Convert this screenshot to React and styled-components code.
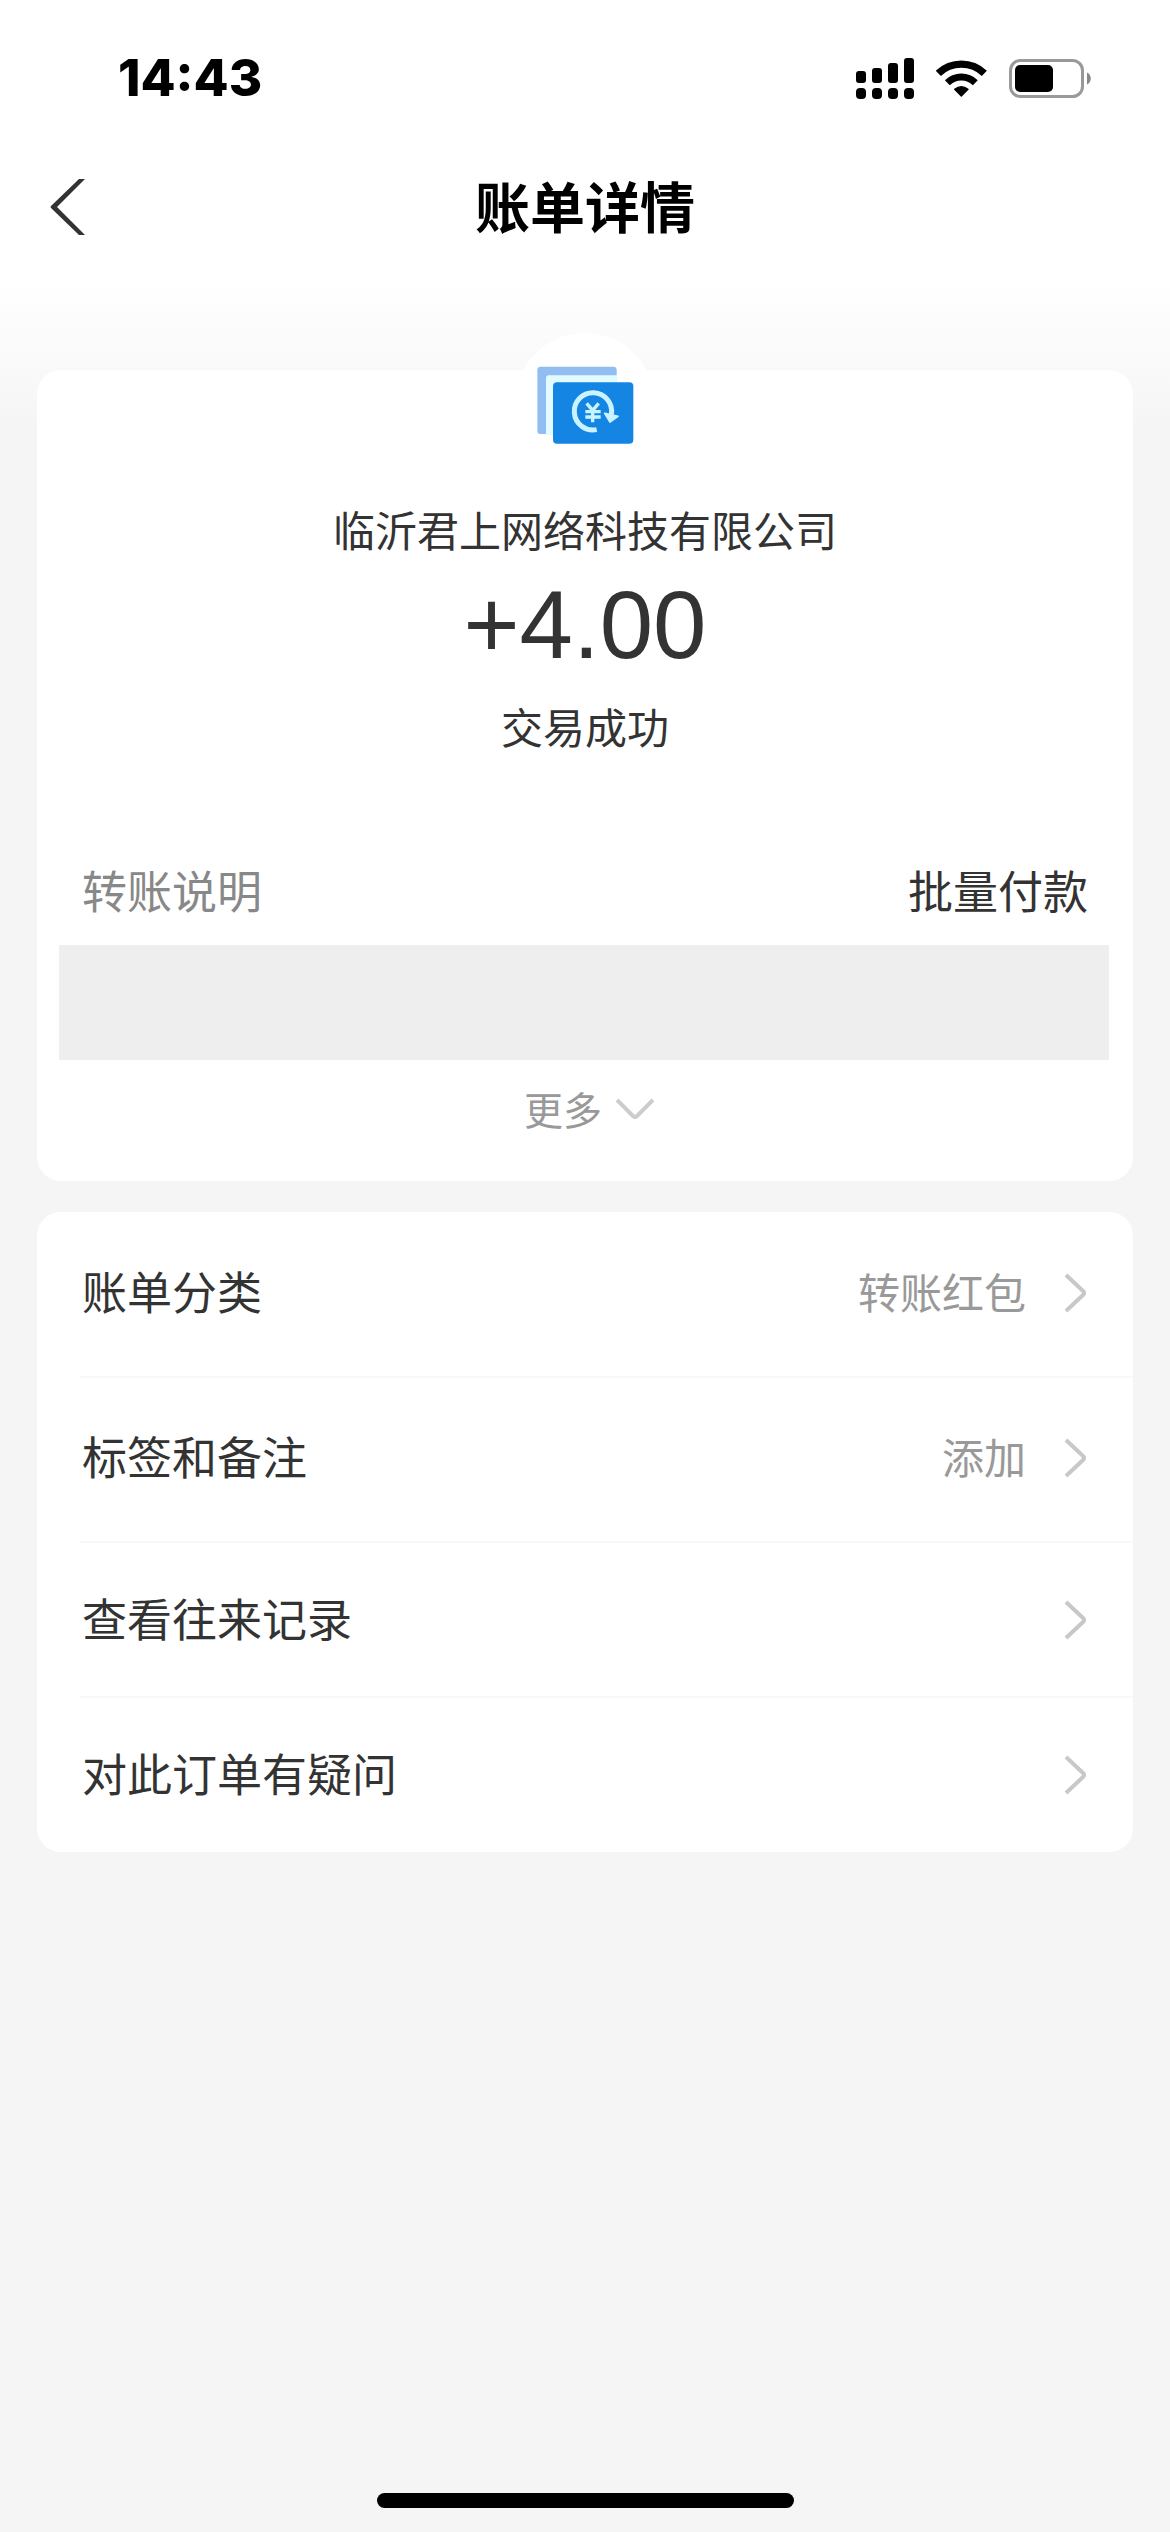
import React, { useState } from "react";
import styled, { createGlobalStyle } from "styled-components";

const GlobalStyle = createGlobalStyle`
  * {
    box-sizing: border-box;
  }

  body {
    margin: 0;
    background-color: #f5f5f5;
    color: #333;
    font-family: "Noto Sans CJK SC", "Noto Sans", sans-serif;
  }

  button {
    border: none;
    padding: 0;
    background-color: transparent;
    color: inherit;
    font-family: inherit;
    text-align: left;
    cursor: pointer;
  }

  svg {
    display: block;
    flex-shrink: 0;
  }
`;

const Container = styled.div`
  display: flex;
  flex-direction: column;
  min-height: 100vh;
  background: linear-gradient(#fff 280px, #f5f5f5 430px);
`;

const StatusBar = styled.div`
  display: flex;
  align-items: center;
  justify-content: space-between;
  height: 156px;
  padding: 0 79px 0 118px;
`;

const Time = styled.span`
  color: #000;
  font-family: "Inter", sans-serif;
  font-size: 51px;
  font-weight: 800;
  line-height: 60px;
`;

const StatusIcons = styled.div`
  display: flex;
  align-items: center;
  gap: 22px;
`;

const Nav = styled.header`
  display: grid;
  grid-template-columns: 1fr auto 1fr;
  align-items: center;
  height: 96px;
  padding: 0 48px;
`;

const Title = styled.h1`
  margin: 0;
  color: #000;
  font-size: 55px;
  font-weight: 700;
  line-height: 80px;
`;

const BackButton = styled.button`
  justify-self: start;
`;

const Main = styled.main`
  display: flex;
  flex-direction: column;
  gap: 31px;
  margin-top: 118px;
  padding: 0 37px;
`;

const Card = styled.section`
  border-radius: 24px;
  background-color: #fff;
`;

const Summary = styled.div`
  display: flex;
  flex-direction: column;
  align-items: center;
`;

const Badge = styled.div`
  display: flex;
  align-items: center;
  justify-content: center;
  width: 140px;
  height: 140px;
  margin-top: -37px;
  padding-top: 4px;
  border-radius: 50%;
  background-color: #fff;
`;

const Text = styled.div`
  font-size: 42px;
  line-height: 56px;
`;

const Company = styled(Text)`
  margin-top: 28px;
`;

const Amount = styled.div`
  margin: 16px 0 21px;
  font-family: "Liberation Sans", sans-serif;
  font-size: 96px;
  line-height: 104px;
`;

const Detail = styled.dl`
  display: flex;
  justify-content: space-between;
  margin: 106px 45px 25px;
  font-size: 45px;
  line-height: 60px;
`;

const Term = styled.dt`
  color: #888;
`;

const Value = styled.dd`
  margin: 0;
`;

const Cover = styled.div`
  height: 115px;
  margin: 0 24px 0 22px;
  background-color: #eee;
`;

const More = styled.button`
  display: flex;
  align-items: center;
  justify-content: center;
  gap: 14px;
  width: 100%;
  padding: 20px 0 45px 8px;
  color: #999;
  font-size: 39px;
  line-height: 56px;
`;

const Row = styled.button`
  display: flex;
  align-items: center;
  width: 100%;
  height: ${({ $tall }) => ($tall ? "165px" : "155px")};
  padding: 0 47px ${({ $tall }) => ($tall ? "8px" : "4px")} 45px;
`;

const List = styled(Card)`
  overflow: hidden;
`;

const Divider = styled.hr`
  height: 2px;
  margin: -1px 0 -1px 43px;
  border: none;
  background-color: #f9f9f9;
`;

const Label = styled.span`
  flex: 1;
  font-size: 45px;
  line-height: 60px;
`;

const Extra = styled(Text)`
  margin-right: 38px;
  color: #999;
`;

const HomeBar = styled.div`
  width: 417px;
  height: 15px;
  margin: auto auto 24px;
  border-radius: 8px;
  background-color: #000;
`;

const SignalIcon = () => (
  <svg width="58" height="41" viewBox="0 0 58 41">
    <rect x="0" y="13" width="10" height="12" rx="3" />
    <rect x="16" y="10" width="10" height="15" rx="3" />
    <rect x="32" y="5" width="10" height="20" rx="3" />
    <rect x="48" y="0" width="10" height="25" rx="3" />
    <rect x="0" y="30" width="10" height="11" rx="4" />
    <rect x="16" y="30" width="10" height="11" rx="4" />
    <rect x="32" y="30" width="10" height="11" rx="4" />
    <rect x="48" y="30" width="10" height="11" rx="4" />
  </svg>
);

const WifiIcon = () => (
  <svg width="51" height="38" viewBox="318 55 153 114" fill="none" stroke="#000">
    <path d="M325 98A100 100 0 0 1 463 98" strokeWidth="22" />
    <path d="M352 126A60 60 0 0 1 436 126" strokeWidth="21" />
    <path
      d="M374 146Q394 130 414 146L394 166Z"
      fill="#000"
      strokeWidth="4"
      strokeLinejoin="round"
    />
  </svg>
);

const BatteryIcon = () => (
  <svg width="82" height="39" viewBox="0 0 82 39">
    <rect x="1.5" y="1.5" width="72" height="36" rx="10" fill="none" stroke="#999" strokeWidth="3" />
    <rect x="6" y="6" width="38" height="27" rx="5" />
    <path d="M78 13.5C83 15.5 83 23.5 78 25.5Z" fill="#888" />
  </svg>
);

const BackIcon = () => (
  <svg width="38" height="64" viewBox="0 0 38 64" fill="#333">
    <path d="M31 7H37L9 35L37 63H31L3 36Q2 35 3 34Z" />
  </svg>
);

const TransferIcon = () => (
  <svg width="100" height="80" viewBox="105 135 300 240">
    <path d="M138 166H352V190H160V345H138Z" fill="#e2fbff" />
    <path
      d="M122 140H340Q350 140 350 150V166H146Q138 166 138 174V342H122Q112 342 112 332V150Q112 140 122 140Z"
      fill="#92bdf0"
    />
    <rect x="159" y="187" width="241" height="184" rx="12" fill="#1585e4" />
    <g fill="none" stroke="#c9f4ff">
      <path d="M290 329A56 56 0 1 1 334 284" strokeWidth="15" />
      <path d="M260 250L278 271L296 250M278 271V307M256 275H302M256 291H302" strokeWidth="10" />
    </g>
    <path d="M314 280L354 289L330 306Z" fill="#c9f4ff" stroke="#c9f4ff" strokeWidth="5" strokeLinejoin="round" />
  </svg>
);

const DownIcon = () => (
  <svg width="38" height="24" viewBox="0 0 38 24" fill="none" stroke="#ccc" strokeWidth="4">
    <path d="M1 4L17 20Q19 22 21 20L37 4" />
  </svg>
);

const ArrowIcon = () => (
  <svg width="22" height="44" viewBox="0 0 22 44" fill="none" stroke="#c8c8c8" strokeWidth="4">
    <path d="M2 6L19 22Q21 24 19 26L2 42" />
  </svg>
);

const rows = [
  { label: "账单分类", extra: "转账红包", tall: true },
  { label: "标签和备注", extra: "添加", tall: true },
  { label: "查看往来记录" },
  { label: "对此订单有疑问" },
];

function App() {
  const [open, setOpen] = useState(false);

  return (
    <Container>
      <GlobalStyle />
      <StatusBar>
        <Time>14:43</Time>
        <StatusIcons>
          <SignalIcon />
          <WifiIcon />
          <BatteryIcon />
        </StatusIcons>
      </StatusBar>
      <Nav>
        <BackButton aria-label="返回">
          <BackIcon />
        </BackButton>
        <Title>账单详情</Title>
      </Nav>
      <Main>
        <Card>
          <Summary>
            <Badge>
              <TransferIcon />
            </Badge>
            <Company>临沂君上网络科技有限公司</Company>
            <Amount>+4.00</Amount>
            <Text>交易成功</Text>
          </Summary>
          <Detail>
            <Term>转账说明</Term>
            <Value>批量付款</Value>
          </Detail>
          <Cover />
          <More aria-expanded={open} onClick={() => setOpen(!open)}>
            更多
            <DownIcon />
          </More>
        </Card>
        <List>
          {rows.map((row, i) => (
            <React.Fragment key={row.label}>
              {i > 0 && <Divider />}
              <Row $tall={row.tall}>
                <Label>{row.label}</Label>
                {row.extra && <Extra as="span">{row.extra}</Extra>}
                <ArrowIcon />
              </Row>
            </React.Fragment>
          ))}
        </List>
      </Main>
      <HomeBar />
    </Container>
  );
}

export default App;
